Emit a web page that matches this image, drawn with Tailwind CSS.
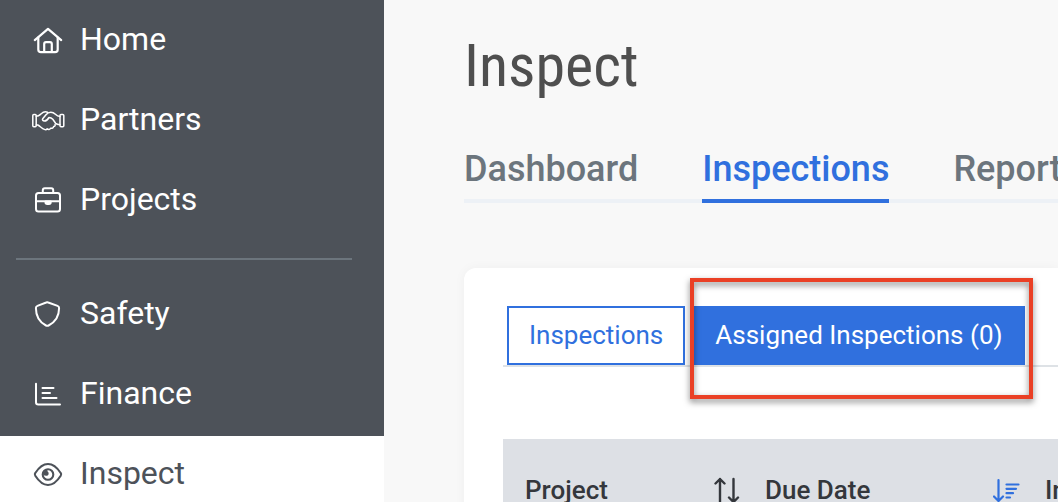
<!DOCTYPE html>
<html lang="en">
<head>
    <meta charset="UTF-8">
    <meta name="viewport" content="width=device-width, initial-scale=1.0">
    <title>Inspect</title>
    <script src="https://cdn.jsdelivr.net/npm/@tailwindcss/browser@4"></script>
</head>
<body class="bg-[#f8f8f8] font-[Roboto,sans-serif]">
    <div class="flex h-screen overflow-hidden">
        <!-- Sidebar -->
        <nav class="w-96 shrink-0 bg-[#4d5259] pt-0.5 text-[32px] leading-10 text-white">
            <a href="#" class="flex h-20 items-center gap-4 px-8 pb-1">
                <svg class="size-8" viewBox="0 0 32 32" fill="none" stroke="currentColor" stroke-width="2.2" stroke-linecap="round" stroke-linejoin="round">
                    <path d="M2.8 16.1 16 4.800l13.200 11.300"/>
                    <path d="M6.300 13.500v12q0 2.700 2.700 2.700h14q2.700 0 2.700-2.700v-12"/>
                    <path d="M12.200 28v-8q0-1.800 1.800-1.800h4q1.800 0 1.800 1.800v8"/>
                </svg>
                <span class="pb-0.5">Home</span>
            </a>
            <a href="#" class="flex h-20 items-center gap-4 px-8 pb-1">
                <svg class="size-8 overflow-visible" viewBox="0 0 32 32" fill="none" stroke="currentColor" stroke-width="1.5" stroke-linecap="round" stroke-linejoin="round">
                    <rect x=".8" y="10.600" width="3.400" height="12.200" rx="1"/>
                    <rect x="28" y="10.600" width="3.800" height="12.200" rx="1"/>
                    <path d="M4.200 12.300c3 0 3.600-1.300 5-2.600 2-1.800 4.200-2.200 6.300-1.500"/>
                    <path d="M4.200 21h1.600c2.400 1.200 4 3.600 6.600 4.400 1.200.5 2.200.2 2.800-.6 1.200 1 2.800.8 3.400-.6 1.500.5 2.700-.2 3-1.600 1.300-.2 1.800-1.200 1.500-2.200"/>
                    <path d="M28 12.500c-2 0-3.300-.8-4.600-2.200-1.300-1.300-2.600-2.100-4.600-2.100-2.200 0-3.600 1-4.800 2.500l-3.300 4c-.7 1 .2 2.300 1.700 2.300 2 0 3.300-1.300 4.600-3.500 1.600 0 2.600.4 3.800 1.800l2.800 4c.7.9 1.400 1.400 4.400 1.400"/>
                </svg>
                <span class="pb-0.5">Partners</span>
            </a>
            <a href="#" class="flex h-20 items-center gap-4 px-8 pb-1">
                <svg class="size-8" viewBox="0 0 32 32" fill="none" stroke="currentColor" stroke-width="2" stroke-linecap="round" stroke-linejoin="round">
                    <rect x="4" y="9" width="24" height="18.500" rx="2.500"/>
                    <path d="M10.800 8.500V6.200q0-2 2-2h6.400q2 0 2 2v2.300M4 17.300h24"/>
                    <path d="M13.500 17.500h5.200v.8q0 1.700-1.700 1.700h-1.800q-1.700 0-1.700-1.700z" fill="currentColor"/>
                </svg>
                <span class="pb-0.5">Projects</span>
            </a>
            <hr class="mx-4 my-4 mr-8 border-t-2 border-[#6c757d]">
            <a href="#" class="flex h-20 items-center gap-4 px-8 pb-1">
                <svg class="size-8" viewBox="0 0 32 32" fill="none" stroke="currentColor" stroke-width="2" stroke-linejoin="round">
                    <path d="M14.200 4.500q1-.5 2 0l9.400 3.400q1.500.5 1.500 2.100c0 7.800-3.300 13.800-10.500 17.500q-1.300.7-2.600 0C7.200 24 3.900 17.800 3.900 10q0-1.600 1.500-2.100z"/>
                </svg>
                <span class="pb-0.5">Safety</span>
            </a>
            <a href="#" class="flex h-20 items-center gap-4 px-8 pb-1">
                <svg class="size-8" viewBox="0 0 32 32" fill="none" stroke="currentColor" stroke-width="2" stroke-linecap="round" stroke-linejoin="round">
                    <path d="M4 5.800v18.500q0 2.300 2.300 2.300H28M10.500 10h11M10.500 15h7.500M10.500 20h14"/>
                </svg>
                <span class="pb-0.5">Finance</span>
            </a>
            <a href="#" aria-current="page" class="flex h-20 items-center gap-4 bg-white px-8 pb-1 text-[#4d5259]">
                <svg class="size-8" viewBox="0 0 32 32" fill="none" stroke="currentColor" stroke-width="2.1" stroke-linejoin="round">
                    <path d="M3.300 17.800q-1.100-1.400 0-2.800C7 9.300 11 6 16 6s9 3.300 12.700 9q1.100 1.400 0 2.800C25 23.600 21 27 16 27S7 23.600 3.300 17.800z"/>
                    <circle cx="16" cy="16.500" r="5.300"/>
                    <path d="M11 16.500q0-2.800 3-4.500l1.300-.5q-.2 2.200 1.200 2.900.7 2.800-1.900 3.400-2 .2-3.600-1.300z" fill="currentColor" stroke="none"/>
                </svg>
                <span class="pb-0.5">Inspect</span>
            </a>
        </nav>

        <!-- Main Content -->
        <main class="min-w-0 flex-1 overflow-hidden pl-20 pt-[30px]">
            <h1 class="font-['Roboto_Condensed','Liberation_Sans_Narrow',sans-serif] text-[60px] leading-[72px] text-[#4f4f4f]">Inspect</h1>

            <!-- Page Tabs -->
            <div class="mt-[43px] flex gap-16 border-b-4 border-[#edf1f6] text-4xl leading-12 font-medium text-[#6c757d]">
                <a href="#" class="-mb-1 h-[58px]">Dashboard</a>
                <a href="#" aria-current="page" class="-mb-1 h-[58px] border-b-4 border-[#3070de] text-[#3070de]">Inspections</a>
                <a href="#" class="-mb-1 h-[58px]">Reports</a>
            </div>

            <!-- Card -->
            <section class="mt-[65px] min-h-screen rounded-tl-xl bg-white pl-[39px] pt-[38px] shadow-[0_0_12px_rgba(0,0,0,0.04)]">
                <div class="flex gap-2 border-b-2 border-[#dee2e6] pl-1 text-[26px] leading-[55px]">
                    <button type="button" class="shrink-0 border-2 border-[#3070de] bg-white px-5 text-[#3070de]">Inspections</button>
                    <div class="relative shrink-0">
                        <button type="button" class="border-2 border-[#3070de] bg-[#3070de] px-5 text-white">Assigned Inspections (0)</button>
                        <!-- Highlight -->
                        <div class="pointer-events-none absolute -top-7 -right-2 -bottom-[34px] -left-[3px] border-4 border-[#ea4025] drop-shadow-[0_3px_3px_rgba(0,0,0,0.5)]"></div>
                    </div>
                </div>

                <table class="mt-18 w-[900px] table-fixed bg-[#dde0e5] text-left text-[26px] leading-8 text-[#34373c]">
                    <thead>
                        <tr>
                            <th scope="col" class="w-60 pt-[35px] pr-0.5 pb-9 pl-[22px] font-medium">
                                <div class="flex items-center justify-between">
                                    Project
                                    <svg class="size-7" viewBox="0 0 28 28" fill="none" stroke="currentColor" stroke-width="2.400" stroke-linecap="round" stroke-linejoin="round">
                                        <path d="M7 26V3M2.500 7.500 7 3l4.500 4.500M20.500 3v23M16 21.500l4.500 4.500 4.500-4.500"/>
                                    </svg>
                                </div>
                            </th>
                            <th scope="col" class="w-70 pt-[35px] pr-0.5 pb-9 pl-[22px] font-medium">
                                <div class="flex items-center justify-between">
                                    Due Date
                                    <svg class="size-7 text-[#3070de]" viewBox="0 0 28 28" fill="none" stroke="currentColor" stroke-width="2.200" stroke-linecap="round" stroke-linejoin="round">
                                        <path d="M5.500 4v21M1 20.500 5.500 25l4.500-4.500M13.500 8.500h12M13.500 12.800h9.500M13.500 17.200h6.500M13.500 21.500h3.500"/>
                                    </svg>
                                </div>
                            </th>
                            <th scope="col" class="pt-[35px] pb-9 pl-[22px] font-medium">Inspection</th>
                        </tr>
                    </thead>
                </table>
            </section>
        </main>
    </div>
</body>
</html>
